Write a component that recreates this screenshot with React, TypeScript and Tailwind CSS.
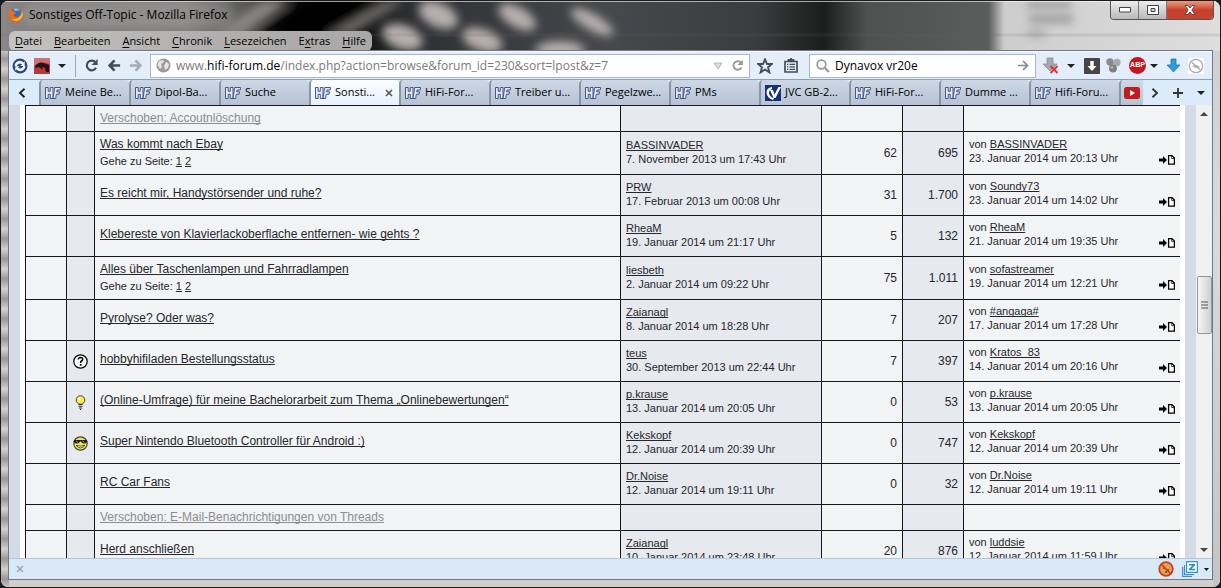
import React from "react";

type Post = {
  title: string;
  pages?: boolean;
  icon?: "question" | "bulb" | "cool";
  author?: string;
  date?: string;
  replies?: string;
  views?: string;
  last?: string;
  lastDate?: string;
};

const posts: Post[] = [
  { title: "Verschoben: Accoutnlöschung" },
  { title: "Was kommt nach Ebay", pages: true, author: "BASSINVADER", date: "7. November 2013 um 17:43 Uhr", replies: "62", views: "695", last: "BASSINVADER", lastDate: "23. Januar 2014 um 20:13 Uhr" },
  { title: "Es reicht mir, Handystörsender und ruhe?", author: "PRW", date: "17. Februar 2013 um 00:08 Uhr", replies: "31", views: "1.700", last: "Soundy73", lastDate: "23. Januar 2014 um 14:02 Uhr" },
  { title: "Klebereste von Klavierlackoberflache entfernen- wie gehts ?", author: "RheaM", date: "19. Januar 2014 um 21:17 Uhr", replies: "5", views: "132", last: "RheaM", lastDate: "21. Januar 2014 um 19:35 Uhr" },
  { title: "Alles über Taschenlampen und Fahrradlampen", pages: true, author: "liesbeth", date: "2. Januar 2014 um 09:22 Uhr", replies: "75", views: "1.011", last: "sofastreamer", lastDate: "19. Januar 2014 um 12:21 Uhr" },
  { title: "Pyrolyse? Oder was?", author: "Zaianagl", date: "8. Januar 2014 um 18:28 Uhr", replies: "7", views: "207", last: "#angaga#", lastDate: "17. Januar 2014 um 17:28 Uhr" },
  { title: "hobbyhifiladen Bestellungsstatus", icon: "question", author: "teus", date: "30. September 2013 um 22:44 Uhr", replies: "7", views: "397", last: "Kratos_83", lastDate: "14. Januar 2014 um 20:16 Uhr" },
  { title: "(Online-Umfrage) für meine Bachelorarbeit zum Thema „Onlinebewertungen“", icon: "bulb", author: "p.krause", date: "13. Januar 2014 um 20:05 Uhr", replies: "0", views: "53", last: "p.krause", lastDate: "13. Januar 2014 um 20:05 Uhr" },
  { title: "Super Nintendo Bluetooth Controller für Android :)", icon: "cool", author: "Kekskopf", date: "12. Januar 2014 um 20:39 Uhr", replies: "0", views: "747", last: "Kekskopf", lastDate: "12. Januar 2014 um 20:39 Uhr" },
  { title: "RC Car Fans", author: "Dr.Noise", date: "12. Januar 2014 um 19:11 Uhr", replies: "0", views: "32", last: "Dr.Noise", lastDate: "12. Januar 2014 um 19:11 Uhr" },
  { title: "Verschoben: E-Mail-Benachrichtigungen von Threads" },
  { title: "Herd anschließen", author: "Zaianagl", date: "10. Januar 2014 um 23:48 Uhr", replies: "20", views: "876", last: "luddsie", lastDate: "12. Januar 2014 um 11:59 Uhr" },
];

const tabs = ["Meine Be...", "Dipol-Ba...", "Suche", "Sonsti...", "HiFi-For...", "Treiber u...", "Pegelzwe...", "PMs", "JVC GB-2...", "HiFi-For...", "Dumme ...", "Hifi-Foru..."];

const menus: [string, string, string][] = [
  ["", "D", "atei"],
  ["", "B", "earbeiten"],
  ["", "A", "nsicht"],
  ["", "C", "hronik"],
  ["", "L", "esezeichen"],
  ["E", "x", "tras"],
  ["", "H", "ilfe"],
];

function FirefoxIcon() {
  return (
    <svg className="size-4 shrink-0" viewBox="0 0 16 16" aria-hidden="true">
      <circle cx="8" cy="8" r="7" fill="#e8590c" />
      <path d="M4 3Q8-1 12 3Q14 6 12 9Q9 11 6 9Q4 7 4 3" fill="#2f6fb8" />
      <path d="M5 2Q9 0 12 3Q10 4 7 4Z" fill="#7fc0ea" />
      <path d="M1 4Q2 2 3 2L4 4Q7 4 8 6L5 8Q6 11 10 10Q14 8 14 3Q17 10 12 14Q7 17 3 13Q0 10 1 4" fill="#ef6c14" />
      <path d="M14 4Q16 10 11 13Q7 15 4 12Q8 13 11 11Q14 8 14 4" fill="#ffc933" />
    </svg>
  );
}

function HfIcon() {
  return (
    <svg className="h-3 w-4 shrink-0" viewBox="0 0 16 12" aria-hidden="true">
      <g fill="#e3e9f3" stroke="#34497d" strokeWidth=".9">
        <path d="M.5.5H3.200V4.300H5.300V.5H8V11.500H5.300V7.300H3.200V11.500H.5Z" />
        <path d="M9.700.5H15.600L15.200 3H12L11.700 4.800H14.500L14.100 7.200H11.300L10.700 11.500H8Z" />
      </g>
    </svg>
  );
}

function JvcIcon() {
  return (
    <svg className="size-4 shrink-0" viewBox="0 0 16 16" aria-hidden="true">
      <path d="M0 0H16V16H0Z" fill="#12337c" />
      <path d="M7 2Q1 3 1.500 8Q2 13 8 15L9 13.500Q4 11 4 8Q4 5 7 4Z" fill="#fff" />
      <path d="M5 5H8L9.500 9.500L13.500 2H16L10.500 13H8.500Z" fill="#fff" />
    </svg>
  );
}

function ReloadIcon({ className }: { className: string }) {
  return (
    <svg className={className} viewBox="0 0 16 16" aria-hidden="true">
      <path d="M12.300 4.700A5.200 5.200 0 1 0 12.800 10.500" fill="none" stroke="currentColor" strokeWidth="2.300" />
      <path d="M14.500 1V7.500H8Z" fill="currentColor" />
    </svg>
  );
}

function ArrowIcon({ className }: { className: string }) {
  return (
    <svg className={className} viewBox="0 0 16 16" aria-hidden="true">
      <path d="M8 2.500L2.800 8L8 13.500M3.500 8H14" fill="none" stroke="currentColor" strokeWidth="2.800" />
    </svg>
  );
}

function Caret({ className = "text-[#222]" }: { className?: string }) {
  return (
    <svg className={"h-1 w-2 shrink-0 " + className} viewBox="0 0 8 4" aria-hidden="true">
      <path d="M0 0H8L4 4Z" fill="currentColor" />
    </svg>
  );
}

function GotoIcon() {
  return (
    <svg className="h-[10px] w-4" viewBox="0 0 16 10" aria-hidden="true">
      <path d="M0 3.500H4V1L8 5L4 9V6.500H0Z" fill="#000" />
      <path d="M9.600.7H13L15.400 3.100V9.200H9.600Z" fill="#fff" stroke="#000" strokeWidth="1.300" />
      <path d="M12.700 1V3.500H15.400" fill="none" stroke="#000" strokeWidth=".7" />
    </svg>
  );
}

function PostIcon({ kind }: { kind: "question" | "bulb" | "cool" }) {
  if (kind === "question") {
    return (
      <svg className="mx-auto size-[15px]" viewBox="0 0 15 15" aria-label="Frage">
        <circle cx="7.500" cy="7.500" r="6.700" fill="#fff" stroke="#000" strokeWidth="1.200" />
        <path d="M5.200 5.500Q5.500 3.500 7.600 3.500Q9.800 3.600 9.700 5.400Q9.600 6.500 7.700 7.600V9" fill="none" stroke="#000" strokeWidth="1.600" />
        <path d="M6.800 10H8.600V11.700H6.800Z" />
      </svg>
    );
  }
  if (kind === "bulb") {
    return (
      <svg className="mx-auto size-[15px]" viewBox="0 0 15 15" aria-label="Idee">
        <circle cx="7.500" cy="5" r="4.300" fill="#f6e84e" stroke="#4f4a12" />
        <circle cx="6.300" cy="3.800" r="1.600" fill="#fffde0" />
        <path d="M5.500 9.500H9.500M5.500 11.300H9.500M6 13H9" stroke="#333" strokeWidth="1.100" />
        <path d="M7 14H8V15H7Z" fill="#222" />
      </svg>
    );
  }
  return (
    <svg className="mx-auto size-[15px]" viewBox="0 0 15 15" aria-label="Cool">
      <circle cx="7.500" cy="7.500" r="6.700" fill="#f0e360" stroke="#4b4818" strokeWidth="1.200" />
      <path d="M1 4H14V6Q13 8 10.500 7.500Q8.300 7 8 5.500H7Q6.700 7 4.500 7.500Q2 8 1 6Z" fill="#182226" />
      <path d="M3 4.800L5 6.600M9.500 4.800L11.500 6.600" stroke="#6fb0b0" strokeWidth=".9" />
      <path d="M3 9.300Q7.500 14.500 12 9.300Q7.500 11 3 9.300" fill="#fff" stroke="#3a3510" strokeWidth=".8" />
    </svg>
  );
}

function Backdrop() {
  return (
    <>
      <div className="absolute bottom-0 left-0 top-12 w-2 bg-[repeating-linear-gradient(180deg,#d2cfcd_0px,#9b9796_10px,#d2cfcd_20px)]" />
      <div className="absolute bottom-0 right-0 top-12 w-[7px] bg-linear-to-b from-[#cfd0d2] via-[#d9dadb] via-35% to-[#c3c4c5]" />
      <svg className="absolute inset-x-0 top-0 h-[50px] w-full" viewBox="0 0 1221 50" preserveAspectRatio="none" aria-hidden="true">
        <defs>
          <linearGradient id="glass">
            <stop offset="0" stopColor="#8b8887" />
            <stop offset=".03" stopColor="#7c7a79" />
            <stop offset=".15" stopColor="#7e7c7b" />
            <stop offset=".2" stopColor="#5a5958" />
            <stop offset=".245" stopColor="#0d0d0d" />
            <stop offset=".28" stopColor="#0a0a0a" />
            <stop offset=".34" stopColor="#2e3134" />
            <stop offset=".5" stopColor="#46484b" />
            <stop offset=".62" stopColor="#3b3c3d" />
            <stop offset=".675" stopColor="#1c1d1d" />
            <stop offset=".71" stopColor="#4e5150" />
            <stop offset=".81" stopColor="#5a5d5b" />
            <stop offset=".823" stopColor="#cdcdcd" />
            <stop offset="1" stopColor="#dedede" />
          </linearGradient>
          <filter id="soft" x="-50%" y="-50%" width="200%" height="200%"><feGaussianBlur stdDeviation="5" /></filter>
          <filter id="smudge" x="-50%" y="-50%" width="200%" height="200%"><feGaussianBlur stdDeviation="4" /></filter>
        </defs>
        <path d="M0 0H1221V50H0Z" fill="url(#glass)" />
        <g filter="url(#soft)">
          <path d="M215 34L262 0H290L238 34Z" fill="#8a8785" />
          <path d="M255 34L305 0H385L330 34Z" fill="#040404" />
          <path d="M325 34L385 0H405L350 34Z" fill="#6b6765" />
          <g fill="#b5afad">
            <ellipse cx="438" cy="14" rx="21" ry="12" transform="rotate(25 438 14)" />
            <ellipse cx="402" cy="36" rx="21" ry="12" transform="rotate(20 402 36)" />
            <ellipse cx="482" cy="39" rx="21" ry="11" transform="rotate(20 482 39)" />
            <ellipse cx="517" cy="16" rx="21" ry="10" transform="rotate(30 517 16)" />
            <ellipse cx="592" cy="21" rx="24" ry="8" transform="rotate(30 592 21)" />
            <ellipse cx="560" cy="49" rx="25" ry="9" />
          </g>
        </g>
        <path d="M1028 0H1072V7H1028ZM1030 14H1074V22H1030ZM1028 30H1046V35H1028Z" fill="#777" opacity=".6" filter="url(#smudge)" />
        <path d="M0 34H1221" stroke="#666" strokeWidth="3" opacity=".15" />
        <path d="M0 .5H1221" stroke="#fff" opacity=".6" />
      </svg>
    </>
  );
}

function TitleBar() {
  return (
    <header className="relative flex h-[30px] shrink-0 items-start justify-between pl-[7px] pr-[6px]">
      <div className="flex h-7 items-center gap-[5px]">
        <FirefoxIcon />
        <h1 className="rounded-full bg-white/15 text-xs text-black shadow-[0_0_8px_6px_rgba(255,255,255,0.15)]">Sonstiges Off-Topic - Mozilla Firefox</h1>
      </div>
      <div className="flex h-[19px] overflow-hidden rounded-b border border-t-0 border-[#555] bg-[#d6d6d6]">
        <button aria-label="Minimieren" className="flex w-7 items-center justify-center border-r border-[#777] bg-linear-to-b from-[#eee] to-[#b8b8b8]">
          <svg className="h-[6px] w-3" viewBox="0 0 12 6"><path d="M.5.5H11.500V5H.5Z" fill="#fff" stroke="#444" /></svg>
        </button>
        <button aria-label="Verkleinern" className="flex w-7 items-center justify-center border-r border-[#777] bg-linear-to-b from-[#eee] to-[#b8b8b8]">
          <svg className="h-[10px] w-3" viewBox="0 0 12 10"><path d="M.5.5H11.500V9.500H.5ZM4 3.500H8V6.500H4Z" fill="#fff" fillRule="evenodd" stroke="#444" /></svg>
        </button>
        <button aria-label="Schließen" className="flex w-[46px] items-center justify-center bg-linear-to-b from-[#e79a86] via-[#c8402a] to-[#c4432e]">
          <svg className="h-[10px] w-3" viewBox="0 0 12 10"><path d="M1 .5H4L6 3L8 .5H11L7.800 5L11 9.500H8L6 7L4 9.500H1L4.200 5Z" fill="#fff" stroke="#5b3030" strokeWidth=".8" /></svg>
        </button>
      </div>
    </header>
  );
}

function MenuBar() {
  return (
    <nav className="relative flex h-5 shrink-0 px-2">
      <ul className="flex items-center gap-3 rounded-md bg-linear-to-r from-[#c4c3c2] via-[#b3b1b0] to-[#a9a8a7] px-[6px] text-[11px] text-black">
        {menus.map(([before, key, after]) => (
          <li key={key}>
            <button>{before}<span className="underline underline-offset-2">{key}</span>{after}</button>
          </li>
        ))}
      </ul>
    </nav>
  );
}

function ToolBar() {
  return (
    <div className="flex h-7 shrink-0 items-center border-t border-[#f4f9fe] bg-[#e3eefa] pl-[3px] pr-2 text-[#434d56]">
      <button aria-label="Synchronisieren">
        <svg className="size-4" viewBox="0 0 16 16"><circle cx="8" cy="8" r="7.500" fill="#2b4a75" /><path d="M2.500 8Q3 3 8 2.800Q10 3 11.500 4.500L12.700 3.200V8H8.500L10 6.200Q6.500 4 4.800 8ZM13.500 8Q13 13 8 13.200Q6 13 4.500 11.500L3.300 12.800V8.200H7.500L6 9.800Q9.500 12 11.200 8Z" fill="#eef4fb" /></svg>
      </button>
      <button aria-label="Erweiterung" className="ml-[6px]">
        <svg className="size-4" viewBox="0 0 16 16"><path d="M0 0H16V16H0Z" fill="#b63a3d" /><path d="M0 0H16V6Q8 2 0 8Z" fill="#cc7274" /><path d="M1 8Q4 4 8 4.500L15 7V14H12L11 10L8 9L9 12L5 9L2 10Z" fill="#251317" /></svg>
      </button>
      <button aria-label="Auswahl" className="ml-2"><Caret /></button>
      <span className="ml-[9px] h-[22px] w-px bg-[#9aa7b4]" />
      <button aria-label="Neu laden" className="ml-2"><ReloadIcon className="size-[15px]" /></button>
      <button aria-label="Zurück" className="ml-2"><ArrowIcon className="size-[15px]" /></button>
      <button aria-label="Vor" className="ml-[6px] text-[#a6adb4]"><ArrowIcon className="size-[15px] -scale-x-100" /></button>
      <div className="ml-[7px] flex h-6 min-w-0 flex-1 items-center border border-[#a9b8c7] bg-white px-[5px]">
        <svg className="size-[15px] shrink-0" viewBox="0 0 15 15" aria-hidden="true"><circle cx="7.500" cy="7.500" r="7" fill="#9b9b9b" /><path d="M3 3L7 2L8 4L5 6L6 9L4 11L1.500 7ZM10 4L13 6L12 10L9 12L8 8Z" fill="#e4e4e4" /></svg>
        <a href="#adresse" className="ml-[5px] flex-1 truncate text-xs text-[#7a7a7a]">www.<span className="text-black">hifi-forum.de</span>/index.php?action=browse&amp;forum_id=230&amp;sort=lpost&amp;z=7</a>
        <button aria-label="Verlauf"><svg className="h-2 w-[10px] text-[#b5b5b5]" viewBox="0 0 10 8"><path d="M1 1H9L5 7Z" fill="#ddd" stroke="currentColor" /></svg></button>
        <button aria-label="Seite neu laden" className="ml-2 text-[#999]"><ReloadIcon className="size-[13px]" /></button>
      </div>
      <button aria-label="Lesezeichen setzen" className="ml-[7px]">
        <svg className="size-4" viewBox="0 0 16 16"><path d="M8 1.300L10 6H15L11 9.300L12.500 14.500L8 11.500L3.500 14.500L5 9.300L1 6H6Z" fill="none" stroke="currentColor" strokeWidth="1.800" /></svg>
      </button>
      <button aria-label="Lesezeichenliste" className="ml-[10px]">
        <svg className="size-4" viewBox="0 0 16 16"><path d="M2 3.500H14V14H2Z" fill="none" stroke="currentColor" strokeWidth="1.700" /><path d="M5 3V1.500H6.500L8 .3L9.500 1.500H11V3Z" fill="currentColor" stroke="currentColor" /><path d="M4 6.300H5.300M6.500 6.300H12M4 8.800H5.300M6.500 8.800H12M4 11.300H5.300M6.500 11.300H12" stroke="currentColor" strokeWidth="1.300" /></svg>
      </button>
      <div className="ml-[10px] flex h-6 w-[227px] items-center border border-[#a9b8c7] bg-white px-[6px]">
        <label htmlFor="search" aria-label="Suchbegriff">
          <svg className="size-[14px] shrink-0" viewBox="0 0 14 14" aria-hidden="true"><circle cx="5.500" cy="5.500" r="4.300" fill="none" stroke="#999" strokeWidth="1.800" /><path d="M8.500 8.500L13 13" stroke="#999" strokeWidth="2.200" /></svg>
        </label>
        <input id="search" aria-label="Suchbegriff" className="ml-[5px] h-full min-w-0 flex-1 bg-transparent text-xs text-black outline-none" defaultValue="Dynavox vr20e" />
        <button aria-label="Suchen">
          <svg className="h-[11px] w-3 shrink-0" viewBox="0 0 12 11"><path d="M1 5.500H10M6 1L10.500 5.500L6 10" fill="none" stroke="#7f8b96" strokeWidth="1.700" /></svg>
        </button>
      </div>
      <button aria-label="Download abbrechen" className="ml-[6px]">
        <svg className="size-[17px]" viewBox="0 0 17 17"><path d="M5 1H11V7H15L8 14L1 7H5Z" fill="#a4a9ae" stroke="#858b91" strokeWidth=".7" /><path d="M8.500 9L15.500 16M15.500 9L8.500 16" stroke="#e4322e" strokeWidth="2" /></svg>
      </button>
      <button aria-label="Downloads" className="ml-2"><Caret /></button>
      <button aria-label="Video laden" className="ml-[9px]">
        <svg className="size-4" viewBox="0 0 16 16"><rect width="16" height="16" rx="1" fill="#464646" /><path d="M6.300 3H9.700V8H12.500L8 13L3.500 8H6.300Z" fill="#fff" /></svg>
      </button>
      <button aria-label="Kugeln" className="ml-[6px]">
        <svg className="size-[15px]" viewBox="0 0 15 15"><circle cx="4" cy="4" r="3.700" fill="#8b8b8b" /><circle cx="11" cy="4.500" r="3.700" fill="#aaa" /><circle cx="7" cy="10.500" r="3.900" fill="#7e7e7e" /><circle cx="6" cy="9.500" r="1.300" fill="#bbb" /></svg>
      </button>
      <button className="ml-2 flex size-[17px] items-center justify-center rounded-full bg-[#c4161c] font-['Liberation_Sans',sans-serif] text-[7px] font-bold text-white">ABP</button>
      <button aria-label="ABP-Menü" className="ml-1"><Caret /></button>
      <button aria-label="Herunterladen" className="ml-2">
        <svg className="size-[15px]" viewBox="0 0 15 15"><path d="M5 1H10V7H14L7.500 14L1 7H5Z" fill="#2f9cd8" stroke="#1b78b4" strokeWidth=".8" /></svg>
      </button>
      <button aria-label="Blocker" className="ml-[7px] bg-white">
        <svg className="size-4" viewBox="0 0 16 16"><circle cx="8" cy="8" r="6.700" fill="none" stroke="#aaa" strokeWidth="1.200" /><path d="M4 8Q8 5 12 9Q9 12 4 8" fill="#bbb" /><path d="M3.500 4L12.500 12" stroke="#aaa" strokeWidth="1.200" /></svg>
      </button>
    </div>
  );
}

function TabStrip() {
  return (
    <div className="flex h-[26px] shrink-0 items-end border-t border-[#8fa0b2] bg-[#dcebfa] text-[11px] text-black">
      <button aria-label="Tabs nach links" className="flex h-full w-[30px] items-center justify-center pr-1">
        <svg className="h-[10px] w-2" viewBox="0 0 8 10"><path d="M6.500.8L2 5L6.500 9.200" fill="none" stroke="#222" strokeWidth="1.900" /></svg>
      </button>
      <div role="tablist" className="flex h-full min-w-0 flex-1 overflow-hidden">
        {tabs.map((tab, i) => (
          <button
            key={i}
            role="tab"
            aria-selected={i === 3}
            className={
              "flex h-full w-[90px] shrink-0 items-center gap-1 rounded-t border-l-2 border-[#8795a6] px-1 " +
              (i === 3 ? "bg-linear-to-b from-[#fbfdff] to-[#e6f1fc]" : "bg-linear-to-b from-[#cdd8e6] to-[#b6c3d4]")
            }
          >
            {i === 8 ? <JvcIcon /> : <HfIcon />}
            <span className="whitespace-nowrap">{tab}</span>
            {i === 3 && (
              <svg className="ml-auto mr-[2px] size-2" viewBox="0 0 8 8" aria-hidden="true"><path d="M1 1L7 7M7 1L1 7" stroke="#555" strokeWidth="1.600" /></svg>
            )}
          </button>
        ))}
        <button role="tab" aria-selected={false} aria-label="YouTube" className="flex h-full flex-1 items-center overflow-hidden rounded-tl border-l-2 border-[#8795a6] bg-linear-to-b from-[#cdd8e6] to-[#b6c3d4] pl-[3px]">
          <svg className="h-3 w-4 shrink-0" viewBox="0 0 16 12"><rect width="16" height="12" rx="2.500" fill="#c01d20" /><path d="M6 3L11 6L6 9Z" fill="#fff" /></svg>
        </button>
      </div>
      <div className="flex h-full w-[69px] shrink-0 items-center gap-[14px] pl-2">
        <button aria-label="Tabs nach rechts"><svg className="h-[10px] w-2" viewBox="0 0 8 10"><path d="M1.500.8L6 5L1.500 9.200" fill="none" stroke="#333" strokeWidth="1.900" /></svg></button>
        <button aria-label="Neuer Tab"><svg className="size-[10px]" viewBox="0 0 10 10"><path d="M5 0V10M0 5H10" stroke="#333" strokeWidth="1.800" /></svg></button>
        <button aria-label="Alle Tabs"><Caret /></button>
      </div>
    </div>
  );
}

const cell = "border-l border-t border-[#15171b] px-[5px]";
const light = "bg-[#f2f3f5]";
const shade = "bg-[#e6e9ee]";
const link = "underline underline-offset-1 [text-decoration-skip-ink:none]";

function Row({ post }: { post: Post }) {
  const moved = !post.author;
  return (
    <tr className={moved ? "h-[26px]" : post.pages ? "h-[43px]" : "h-[41px]"}>
      <td className={cell + " " + light} />
      <td className={cell + " px-0 " + shade}>{post.icon && <PostIcon kind={post.icon} />}</td>
      <td className={cell + " text-xs " + light + (moved ? " pb-px" : post.pages ? " pb-[3px]" : " pb-[5px]")}>
        <a href="#thema" className={link + (moved ? " text-[#8a8d92]" : "")}>{post.title}</a>
        {post.pages && (
          <p className="mt-[2px] text-[11px]/[14px]">
            Gehe zu Seite: <a href="#seite1" className={link}>1</a> <a href="#seite2" className={link}>2</a>
          </p>
        )}
      </td>
      <td className={cell + " pb-[3px] text-[11px]/[14px] " + shade}>
        {post.author && <a href="#autor" className={link}>{post.author}</a>}
        <p>{post.date}</p>
      </td>
      <td className={cell + " text-right text-xs " + light}>{post.replies}</td>
      <td className={cell + " text-right text-xs " + shade}>{post.views}</td>
      <td className={cell + " pb-1 text-[11px]/[14px] " + light}>
        {post.last && (
          <div className="flex items-end justify-between">
            <div>
              <p>von <a href="#letzter" className={link}>{post.last}</a></p>
              <p>{post.lastDate}</p>
            </div>
            <a href="#beitrag" aria-label="Letzter Beitrag"><GotoIcon /></a>
          </div>
        )}
      </td>
    </tr>
  );
}

function ForumPage() {
  return (
    <main className="flex min-h-0 flex-1 bg-[#d3dce4]">
      <div className="min-w-0 flex-1 overflow-hidden px-[11px]">
        <div className="bg-white px-[5px]">
          <table className="w-full table-fixed border-separate border-spacing-0 font-['Liberation_Sans',Arial,sans-serif] text-[#25272c]">
            <colgroup>
              <col className="w-[41px]" />
              <col className="w-[28px]" />
              <col />
              <col className="w-[201px]" />
              <col className="w-[81px]" />
              <col className="w-[61px]" />
              <col className="w-[217px]" />
            </colgroup>
            <tbody>
              {posts.map((post, i) => <Row key={i} post={post} />)}
            </tbody>
          </table>
        </div>
      </div>
      <div className="flex w-4 shrink-0 flex-col items-center bg-[#f0f0f0]">
        <button aria-label="Nach oben" className="flex h-[17px] items-center"><Caret className="rotate-180 text-[#444]" /></button>
        <div className="flex-[154]" />
        <div className="flex h-[58px] w-[15px] items-center justify-center rounded-xs border border-[#979797] bg-linear-to-r from-[#f6f6f6] to-[#cfcfd1]">
          <svg className="h-2 w-[7px]" viewBox="0 0 7 8"><path d="M0 1H7M0 4H7M0 7H7" stroke="#555" /></svg>
        </div>
        <div className="flex-[207]" />
        <button aria-label="Nach unten" className="flex h-[17px] items-center"><Caret className="text-[#444]" /></button>
      </div>
    </main>
  );
}

function StatusBar() {
  return (
    <footer className="flex h-[21px] shrink-0 items-center border-t border-[#b4c6d8] bg-[#dae9f8] pl-[7px] pr-[3px]">
      <button aria-label="Leiste schließen">
        <svg className="size-2" viewBox="0 0 8 8"><path d="M1 1L7 7M7 1L1 7" stroke="#98a5b3" strokeWidth="1.500" /></svg>
      </button>
      <div className="ml-auto flex items-center">
        <button aria-label="Cookies blockiert">
          <svg className="size-4" viewBox="0 0 16 16"><circle cx="8" cy="8" r="6.800" fill="#e2a254" stroke="#c83f22" strokeWidth="1.700" /><path d="M5 6H7V8H5ZM9 8H11V10H9ZM7 10H9V12H7Z" fill="#9b5a20" /><path d="M3 3L13 13" stroke="#c83f22" strokeWidth="1.700" /></svg>
        </button>
        <button aria-label="Zotero" className="ml-2">
          <svg className="size-4" viewBox="0 0 16 16"><path d="M.6 6V15.400H10M2.500 4V13.500H12" fill="none" stroke="#3795cc" strokeWidth="1.200" /><path d="M4.600.6H15.400V11.400H4.600Z" fill="#fff" stroke="#3795cc" strokeWidth="1.200" /><path d="M7 3H13V4.600L9.500 7.700H13V9.300H7V7.700L10.500 4.600H7Z" fill="#238fc8" /></svg>
        </button>
        <button aria-label="Mehr" className="ml-[6px]"><svg className="h-[3px] w-[5px]" viewBox="0 0 5 3"><path d="M0 0H5L2.500 3Z" fill="#111" /></svg></button>
      </div>
    </footer>
  );
}

export default function App() {
  return (
    <div className="h-screen bg-[#1b1b20]">
      <div className="relative flex h-full flex-col overflow-hidden rounded-lg border border-[#1b1b1b] bg-[#d0cfce] font-['Open_Sans','Noto_Sans',sans-serif]">
        <Backdrop />
        <TitleBar />
        <MenuBar />
        <div className="relative mx-2 mb-2 flex min-h-0 flex-1 flex-col shadow-[0_0_0_1px_#6f7a86]">
          <ToolBar />
          <TabStrip />
          <ForumPage />
          <StatusBar />
        </div>
      </div>
    </div>
  );
}
